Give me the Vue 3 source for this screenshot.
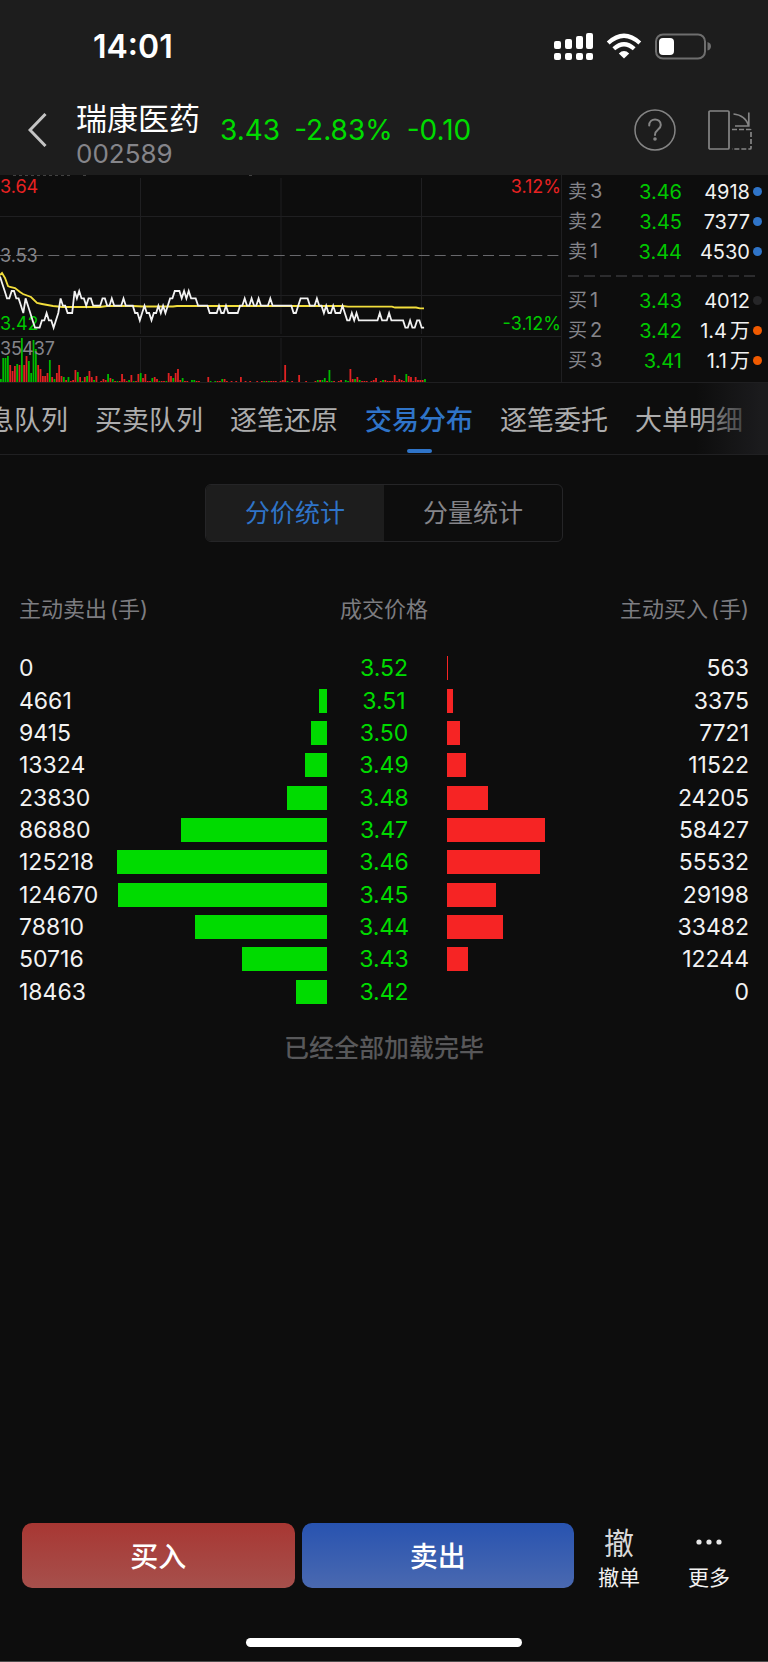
<script setup>
import { computed, ref } from "vue";

const stock = ref({
  name: "瑞康医药",
  code: "002589",
  price: "3.43",
  percent: "-2.83%",
  change: "-0.10"
});

// 分时数据：每分钟一个点，数字为价格末位（3.4x）
const minutePrices =
  "987667766546543222334332346554447676656655556655655556555544345443445454566777676766655555" +
  "444454454444455655655655556555555555445666655565545445444543343433333333343334333333223223" +
  "322";

const minuteVolumes = (
  "g3 g24 g24 g26 r17 r11 r16 g18 r17 g44 r17 r26 g21 g9 g42 g33 r17 r13 r6 r6 r9 g22 r5 g3 r9 r17 r6 g5 r2 g5 " +
  "r1 r2 r12 g10 r5 g1 r5 g6 r11 r5 g2 r6 r0 r1 r3 r2 g8 r4 g3 r1 g1 r1 r8 r3 r1 g2 r7 g1 r1 r8 " +
  "g9 r4 r8 r1 r1 g4 r5 r3 g1 r1 r1 g1 r9 r6 g4 r9 r13 r2 g4 r1 r1 r0 g2 g2 r1 r1 r0 r0 r0 r5 " +
  "g1 r0 g1 r1 r1 g3 r3 r1 g0 r1 r0 r1 r0 r5 r0 r1 r0 r1 r0 r0 r1 g0 r1 g1 r1 g1 r1 r1 r1 r0 " +
  "r1 r2 r17 g1 r0 r1 r0 r0 r7 r0 r0 r1 g0 r0 r0 r1 g2 r2 g2 g4 r1 g12 g1 r1 r0 r1 r2 r0 g2 g1 " +
  "r13 r3 g3 r5 g2 r1 r1 r1 r0 r1 r2 r4 r0 r1 g2 r2 r1 r1 r1 r7 r1 r3 r2 r1 g8 r6 r5 r1 r5 r2 " +
  "r2 r2 g3"
).split(" ");

const minuteWidth = 2.33;

const priceLine = computed(() =>
  minutePrices
    .split("")
    .map((d, i) => `${(i * minuteWidth).toFixed(1)},${(152.7 - (d - 2) * 7.33).toFixed(1)}`)
    .join(" ")
);

const volumeBars = computed(() =>
  minuteVolumes.map((v, i) => ({
    x: i * minuteWidth,
    height: Number(v.slice(1)),
    color: v[0] === "g" ? "#00b900" : "#e02222"
  }))
);

const sells = [
  { label: "卖3", price: "3.46", volume: "4918", dot: "blue" },
  { label: "卖2", price: "3.45", volume: "7377", dot: "blue" },
  { label: "卖1", price: "3.44", volume: "4530", dot: "blue" }
];
const buys = [
  { label: "买1", price: "3.43", volume: "4012", dot: "gray" },
  { label: "买2", price: "3.42", volume: "1.4", unit: "万", dot: "orange" },
  { label: "买3", price: "3.41", volume: "1.1", unit: "万", dot: "orange" }
];

const tabs = ["信息队列", "买卖队列", "逐笔还原", "交易分布", "逐笔委托", "大单明细"];
const activeTab = ref("交易分布");

const modes = ["分价统计", "分量统计"];
const activeMode = ref("分价统计");

const rows = [
  { price: "3.52", sell: 0, buy: 563 },
  { price: "3.51", sell: 4661, buy: 3375 },
  { price: "3.50", sell: 9415, buy: 7721 },
  { price: "3.49", sell: 13324, buy: 11522 },
  { price: "3.48", sell: 23830, buy: 24205 },
  { price: "3.47", sell: 86880, buy: 58427 },
  { price: "3.46", sell: 125218, buy: 55532 },
  { price: "3.45", sell: 124670, buy: 29198 },
  { price: "3.44", sell: 78810, buy: 33482 },
  { price: "3.43", sell: 50716, buy: 12244 },
  { price: "3.42", sell: 18463, buy: 0 }
];
const maxVolume = Math.max(...rows.flatMap((r) => [r.sell, r.buy]));

function barWidth(value) {
  return `${(value / maxVolume) * 100}%`;
}
</script>

<template>
  <div class="page">
    <header class="header">
      <div class="status-bar">
        <span class="time">14:01</span>
        <svg class="status-icons" width="160" height="30" viewBox="0 0 160 30" aria-hidden="true">
          <g fill="#fff">
            <rect x="3" y="10" width="7" height="8" rx="2" />
            <rect x="14" y="8" width="7" height="10" rx="2" />
            <rect x="25" y="5" width="7" height="13" rx="2" />
            <rect x="35" y="2" width="7" height="16" rx="2" />
            <rect x="3" y="22" width="7" height="7" rx="2" />
            <rect x="14" y="22" width="7" height="7" rx="2" />
            <rect x="25" y="22" width="7" height="7" rx="2" />
            <rect x="35" y="22" width="7" height="7" rx="2" />
            <path d="M73 27.5 L67.8 22.4 Q73 17.8 78.2 22.4 Z" />
          </g>
          <g fill="none" stroke="#fff" stroke-width="4.2">
            <path d="M57.2 12 Q73 -2.5 88.8 12" />
            <path d="M62.8 17.8 Q73 8.8 83.2 17.8" />
          </g>
          <rect x="105" y="3.5" width="49" height="24" rx="7" fill="none" stroke="#6e6e6e" stroke-width="2" />
          <rect x="108" y="7" width="15" height="17" rx="4" fill="#fff" />
          <path d="M156.5 11 Q160 12 160 15.3 Q160 18.6 156.5 19.6 Z" fill="#6e6e6e" />
        </svg>
      </div>
      <div class="nav">
        <button type="button" class="icon-btn back" aria-label="返回">
          <svg width="20" height="34" viewBox="0 0 20 34">
            <path d="M17.5 1 L2 17 L17.5 33" fill="none" stroke="#c4c4c4" stroke-width="3" />
          </svg>
        </button>
        <div class="title">
          <h1>{{ stock.name }}</h1>
          <span class="code">{{ stock.code }}</span>
        </div>
        <div class="quote">
          <span>{{ stock.price }}</span>
          <span>{{ stock.percent }}</span>
          <span>{{ stock.change }}</span>
        </div>
        <button type="button" class="icon-btn help" aria-label="帮助">
          <svg width="42" height="42" viewBox="0 0 42 42" fill="none" stroke="#858585">
            <circle cx="21" cy="21" r="20" stroke-width="1.5" />
            <path
              d="M15.2 16.5 C15.2 8.6 26.8 8.6 26.8 16 C26.8 20.8 21 20.4 21 26"
              stroke-width="2"
              stroke-linecap="round"
            />
            <circle cx="21" cy="30" r="1.8" fill="#858585" stroke="none" />
          </svg>
        </button>
        <button type="button" class="icon-btn" aria-label="横屏">
          <svg width="44" height="40" viewBox="0 0 44 40" fill="none" stroke="#858585" stroke-width="1.7">
            <rect x="1" y="1" width="20" height="38" rx="1" />
            <path d="M25.5 4 C33 4.5 39 9 40.5 16 M40.8 2.5 V16 H27" />
            <path d="M24 19.5 H42 Q43 19.5 43 20.5 V38 Q43 39 42 39 H24" stroke-dasharray="5 2" />
          </svg>
        </button>
      </div>
    </header>

    <section class="market">
      <svg class="chart" viewBox="0 0 561 208">
        <g stroke="#1f1f21">
          <path d="M0 41.5 H561 M0 120.5 H561 M0 161.5 H561 M0 207.5 H561" />
          <path d="M140.5 3 V159 M140.5 163 V207 M281 3 V159 M281 163 V207 M421.5 3 V159 M421.5 163 V207" />
        </g>
        <path d="M13 0 H72 M83 0 h3 M249 0 h4" stroke="#777" stroke-dasharray="3 3" />
        <path d="M0 80.5 H561" stroke="#68686c" stroke-dasharray="11 5.1" />
        <rect
          v-for="(bar, i) in volumeBars"
          :key="i"
          :x="bar.x"
          :y="207 - bar.height"
          width="1.8"
          :height="bar.height"
          :fill="bar.color"
        />
        <g class="axis">
          <text x="0" y="18" fill="#e82222">3.64</text>
          <text x="0" y="87" fill="#85858a">3.53</text>
          <text x="0" y="155" fill="#00c800">3.42</text>
          <text x="0" y="180" fill="#85858a">35437</text>
          <text x="561" y="18" fill="#e82222" text-anchor="end">3.12%</text>
          <text x="561" y="155" fill="#00c800" text-anchor="end">-3.12%</text>
        </g>
        <polyline
          points="0,100 2,98 5,103 8,111 10,112 15,113 20,117 23,119 31,122 37,128 42,129 53,131 63,132 100,132 107,131 133,131 143,131.5 173,131.5 177,131 343,131 348,131.6 392,131.6 395,132.5 416,132.5 420,133.3 424,133.3"
          fill="none"
          stroke="#f2de3c"
          stroke-width="1.8"
        />
        <polyline :points="priceLine" fill="none" stroke="#f2f2f2" stroke-width="1.8" />
      </svg>

      <div class="book">
        <div v-for="item in sells" :key="item.label" class="book-row">
          <span class="book-label">{{ item.label[0] }}<i>{{ item.label[1] }}</i></span>
          <span class="book-price">{{ item.price }}</span>
          <span class="book-volume">{{ item.volume }}</span>
          <span class="dot" :class="item.dot"></span>
        </div>
        <svg class="divider" height="2" aria-hidden="true">
          <path d="M0 1 H190" stroke="#2c2c2e" stroke-width="2" stroke-dasharray="11 5" />
        </svg>
        <div v-for="item in buys" :key="item.label" class="book-row">
          <span class="book-label">{{ item.label[0] }}<i>{{ item.label[1] }}</i></span>
          <span class="book-price">{{ item.price }}</span>
          <span class="book-volume">{{ item.volume }}<span v-if="item.unit" class="unit">{{ item.unit }}</span></span>
          <span class="dot" :class="item.dot"></span>
        </div>
      </div>
    </section>

    <nav class="tabs">
      <div class="tab-list">
        <button
          v-for="tab in tabs"
          :key="tab"
          type="button"
          class="tab"
          :class="{ active: tab === activeTab }"
          @click="activeTab = tab"
        >
          {{ tab }}
        </button>
      </div>
    </nav>

    <main class="content">
      <div class="segment">
        <button
          v-for="mode in modes"
          :key="mode"
          type="button"
          :class="{ active: mode === activeMode }"
          @click="activeMode = mode"
        >
          {{ mode }}
        </button>
      </div>

      <table class="stats">
        <colgroup>
          <col class="col-sell" />
          <col />
          <col class="col-price" />
          <col />
          <col class="col-buy" />
        </colgroup>
        <thead>
          <tr>
            <th colspan="2" class="left">主动卖出<span class="unit">(手)</span></th>
            <th class="price">成交价格</th>
            <th colspan="2" class="right">主动买入<span class="unit">(手)</span></th>
          </tr>
        </thead>
        <tbody>
          <tr v-for="row in rows" :key="row.price">
            <td class="left">{{ row.sell }}</td>
            <td><div class="bar sell" :style="{ width: barWidth(row.sell) }"></div></td>
            <td class="price">{{ row.price }}</td>
            <td><div class="bar buy" :style="{ width: barWidth(row.buy) }"></div></td>
            <td class="right">{{ row.buy }}</td>
          </tr>
        </tbody>
      </table>

      <p class="loaded">已经全部加载完毕</p>
    </main>

    <footer class="footer">
      <div class="actions">
        <button type="button" class="trade buy-btn">买入</button>
        <button type="button" class="trade sell-btn">卖出</button>
        <button type="button" class="action">
          <span class="action-icon">撤</span>
          <span>撤单</span>
        </button>
        <button type="button" class="action">
          <svg class="action-icon" width="30" height="34" viewBox="0 0 30 34" fill="#e6e6e6" aria-hidden="true">
            <circle cx="5" cy="17" r="2.6" />
            <circle cx="15" cy="17" r="2.6" />
            <circle cx="25" cy="17" r="2.6" />
          </svg>
          <span>更多</span>
        </button>
      </div>
      <div class="home-indicator"></div>
    </footer>
  </div>
</template>

<style>
body {
  background: #0d0d0d;
}
</style>

<style scoped>
.page {
  display: flex;
  flex-direction: column;
  box-sizing: border-box;
  min-height: 100vh;
  overflow: hidden;
  background: #0d0d0d;
  border-bottom: 1px solid #4c4c4c;
  color: #f2f2f2;
  font-family: Inter, "Noto Sans CJK SC", sans-serif;
}

button {
  padding: 0;
  border: none;
  background: transparent;
  color: inherit;
  font-family: inherit;
  cursor: pointer;
}

svg {
  display: block;
}

.header {
  background: #1d1d1d;
}

.status-bar {
  display: flex;
  justify-content: space-between;
  padding: 27px 57px 18px 93px;
}

.time {
  color: #fff;
  font-size: 32px;
  font-weight: 600;
  line-height: 40px;
}

.status-icons {
  margin-top: 4px;
}

.nav {
  display: flex;
  align-items: center;
  height: 90px;
  padding: 0 16px 0 28px;
}

.back {
  width: 48px;
}

.title {
  padding-top: 14px;
}

.title h1 {
  margin: 0;
  color: #fff;
  font-size: 31px;
  font-weight: 400;
  line-height: 34px;
}

.code {
  display: block;
  color: #85858a;
  font-size: 26px;
  line-height: 36px;
}

.quote {
  display: flex;
  flex: 1;
  gap: 14px;
  margin-left: 20px;
  color: #00db00;
  font-size: 28px;
}

.help {
  margin-right: 32px;
}

.market {
  display: flex;
}

.chart {
  flex: 1;
  min-width: 0;
}

.axis {
  font-size: 18px;
}

.book {
  box-sizing: border-box;
  width: 207px;
  padding: 1px 6px 0;
  border-left: 1px solid #1f1f21;
  border-bottom: 1px solid #1f1f21;
}

.book-row {
  display: grid;
  grid-template-columns: 45px 69px 68px 12px;
  align-items: center;
  height: 30px;
  font-size: 20px;
  line-height: 30px;
}

.book-label {
  color: #85858a;
  font-size: 19px;
}

.book-label i {
  margin-left: 3px;
  font-size: 20px;
  font-style: normal;
}

.book-price {
  color: #00c800;
  text-align: right;
}

.book-volume {
  text-align: right;
  white-space: nowrap;
}

.unit {
  margin-left: 3px;
}

.dot {
  justify-self: end;
  width: 9px;
  height: 9px;
  border-radius: 50%;
}

.dot.blue {
  background: #2f74c8;
}

.dot.gray {
  background: #262628;
}

.dot.orange {
  background: #f05a00;
}

.divider {
  width: 190px;
  margin: 9px 0 8px;
}

.tabs {
  position: relative;
  overflow: hidden;
  border-bottom: 1px solid #202022;
}

.tabs::after {
  content: "";
  position: absolute;
  top: 0;
  right: 0;
  bottom: 0;
  width: 72px;
  background: linear-gradient(90deg, rgba(27, 27, 29, 0), #1b1b1d 90%);
  pointer-events: none;
}

.tab-list {
  display: flex;
  gap: 27px;
  margin-left: -40px;
}

.tab {
  display: flex;
  flex: none;
  flex-direction: column;
  align-items: center;
  padding-top: 5px;
  color: #adadad;
  font-size: 27px;
  line-height: 66px;
}

.tab::after {
  content: "";
  width: 25px;
  height: 4px;
  margin-top: -5px;
  margin-bottom: 1px;
  border-radius: 2px;
}

.tab.active {
  color: #2f74c8;
  font-weight: 500;
}

.tab.active::after {
  background: #2f74c8;
}

.content {
  flex: 1;
  padding: 29px 19px 0;
}

.segment {
  display: flex;
  box-sizing: border-box;
  width: 358px;
  margin: 0 auto;
  overflow: hidden;
  border: 1px solid #252527;
  border-radius: 6px;
}

.segment button {
  flex: 1;
  color: #85858a;
  font-size: 25px;
  line-height: 56px;
}

.segment button.active {
  background: #1d1d1d;
  color: #2f74c8;
}

.stats {
  width: 100%;
  height: 422px;
  margin-top: 44px;
  border-collapse: collapse;
  table-layout: fixed;
  font-size: 23px;
}

.col-sell {
  width: 98px;
}

.col-price {
  width: 120px;
}

.col-buy {
  width: 92px;
}

th,
td {
  padding: 0;
  white-space: nowrap;
}

th {
  height: 66px;
  padding-bottom: 24px;
  box-sizing: border-box;
  color: #7c7c80;
  font-size: 22px;
  font-weight: 400;
}

td {
  height: 32px;
  line-height: 32px;
}

.left {
  text-align: left;
}

.right {
  text-align: right;
}

.price {
  padding-right: 6px;
  text-align: center;
}

td.price {
  color: #00db00;
}

.bar {
  height: 24px;
}

.bar.sell {
  margin-left: auto;
  background: #00db00;
}

.bar.buy {
  background: #f62424;
}

.loaded {
  margin: 20px 0 0;
  color: #58585a;
  font-size: 25px;
  font-weight: 500;
  line-height: 40px;
  text-align: center;
}

.actions {
  display: flex;
  align-items: stretch;
  padding: 0 14px 0 22px;
}

.trade {
  flex: 1;
  height: 65px;
  padding-bottom: 2px;
  border-radius: 10px;
  color: #fff;
  font-size: 28px;
  font-weight: 500;
}

.buy-btn {
  margin-right: 7px;
  background: linear-gradient(#a83733, #a6504c);
}

.sell-btn {
  background: linear-gradient(#2853b0, #4a69b0);
}

.action {
  display: flex;
  flex-direction: column;
  align-items: center;
  justify-content: space-between;
  width: 90px;
  padding-top: 2px;
  font-size: 21px;
  line-height: 20px;
}

.action-icon {
  height: 34px;
  color: #d8d8d8;
  font-size: 30px;
  line-height: 36px;
}

.home-indicator {
  width: 36%;
  height: 9px;
  margin: 50px auto 14px;
  border-radius: 5px;
  background: #fff;
}
</style>
